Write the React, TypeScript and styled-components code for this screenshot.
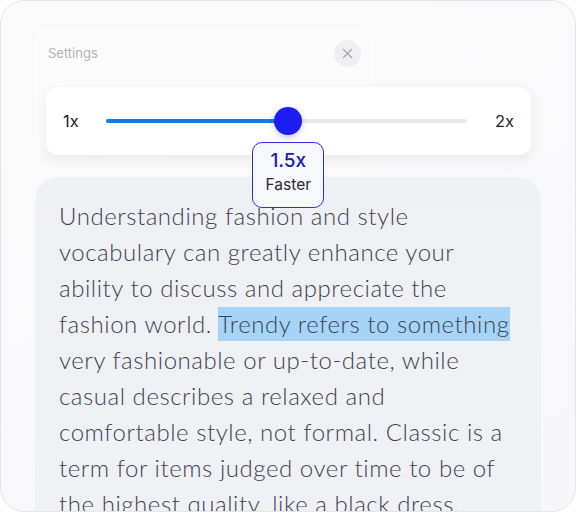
import React from 'react';
import styled, { createGlobalStyle } from 'styled-components';

const GlobalStyle = createGlobalStyle`
    * { box-sizing: border-box; }
    body {
        margin: 0;
        background: #ffffff;
        font-family: 'Inter', 'Liberation Sans', sans-serif;
    }
`;

const Card = styled.div`
    position: relative;
    width: 576px;
    height: 512px;
    border: 1px solid #e6e6ea;
    border-radius: 24px;
    background: linear-gradient(160deg, #fbfbfc 0%, #f7f7f9 100%);
    overflow: hidden;
    padding: 38px 34px 0 33px;
`;

const Settings = styled.div`
    position: relative;

    &::before {
        content: '';
        position: absolute;
        left: 0;
        top: -10px;
        width: 340px;
        height: 118px;
        border-radius: 14px;
        background: rgba(255, 255, 255, 0.35);
    }
`;

const HeaderRow = styled.div`
    position: relative;
    display: flex;
    align-items: center;
    justify-content: space-between;
    width: 327px;
    height: 28px;
    padding-left: 14px;
`;

const Title = styled.span`
    font-size: 13px;
    color: #b3b3b6;
`;

const CloseButton = styled.button`
    display: flex;
    align-items: center;
    justify-content: center;
    width: 27px;
    height: 27px;
    padding: 0;
    border: none;
    border-radius: 50%;
    background: #efeff1;
    color: #a0a0a4;
`;

const SliderCard = styled.div`
    position: relative;
    display: flex;
    align-items: center;
    height: 68px;
    margin: 20px 10px 0 12px;
    padding: 0 17px;
    border-radius: 12px;
    background: #ffffff;
    box-shadow: 0 4px 14px rgba(0, 0, 0, 0.07);
`;

const Label = styled.span`
    font-size: 16.5px;
    color: #222226;
`;

const Track = styled.div`
    position: relative;
    flex: 1;
    height: 4px;
    margin: 0 28px 0 27px;
    border-radius: 2px;
    background: #e8e8ea;
`;

const Fill = styled.div`
    height: 100%;
    border-radius: 2px;
    background: #0a7bf7;
`;

const Thumb = styled.div`
    position: absolute;
    top: 50%;
    width: 28px;
    height: 28px;
    margin: -14px 0 0 -12px;
    border-radius: 50%;
    background: #1d1df0;
    box-shadow: 0 2px 6px rgba(20, 20, 120, 0.25);
`;

const Bubble = styled.div`
    position: absolute;
    top: 23px;
    width: 72px;
    margin-left: -34px;
    padding: 6px 0 11px;
    border: 1px solid #2b2bee;
    border-radius: 10px;
    background: #f7f8fc;
    text-align: center;
    z-index: 2;
`;

const BubbleValue = styled.div`
    font-size: 19px;
    font-weight: 500;
    line-height: 24px;
    color: #1a1ab0;
`;

const BubbleNote = styled.div`
    margin-top: 1px;
    font-size: 15.5px;
    line-height: 22px;
    color: #2a2a30;
`;

const Reading = styled.div`
    margin: 22px 0 0 1px;
    padding: 21px 24px 40px;
    border-radius: 24px;
    background: linear-gradient(180deg, #eef0f3 0%, #f0f1f4 100%);
    font-family: 'Lato', 'Liberation Sans', sans-serif;
    font-weight: 300;
    font-size: 24px;
    letter-spacing: 0.55px;
    line-height: 36px;
    color: #3c4354;
`;

const Mark = styled.span`
    background: #a6d4f6;
    padding: 2px 0 3px;
`;

const speed = { min: 1, max: 2, value: 1.5 };

export default function App() {
    const pct = ((speed.value - speed.min) / (speed.max - speed.min)) * 100;
    return (
        <>
            <GlobalStyle />
            <Card>
                <Settings>
                    <HeaderRow>
                        <Title>Settings</Title>
                        <CloseButton aria-label="Close">
                            <svg width="11" height="11" viewBox="0 0 12 12">
                                <path d="M1.5 1.5l9 9M10.5 1.5l-9 9" stroke="currentColor" strokeWidth="1.5" strokeLinecap="round" />
                            </svg>
                        </CloseButton>
                    </HeaderRow>
                    <SliderCard>
                        <Label>1x</Label>
                        <Track>
                            <Fill style={{ width: `${pct}%` }} />
                            <Thumb style={{ left: `${pct}%` }} />
                            <Bubble style={{ left: `${pct}%` }}>
                                <BubbleValue>{speed.value}x</BubbleValue>
                                <BubbleNote>Faster</BubbleNote>
                            </Bubble>
                        </Track>
                        <Label>2x</Label>
                    </SliderCard>
                </Settings>
                <Reading>
                    Understanding fashion and style vocabulary can greatly enhance your ability to discuss and
                    appreciate the fashion world. <Mark>Trendy refers to something</Mark> very fashionable or
                    up-to-date, while casual describes a relaxed and comfortable style, not formal. Classic is a term
                    for items judged over time to be of the highest quality, like a black dress.
                </Reading>
            </Card>
        </>
    );
}
